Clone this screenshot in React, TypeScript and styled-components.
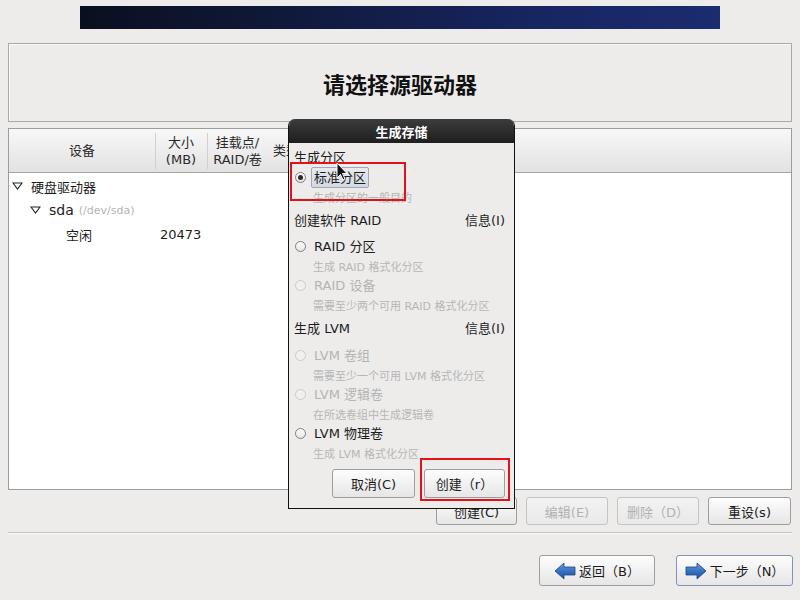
import React from "react";
import styled, { createGlobalStyle } from "styled-components";

const Global = createGlobalStyle`
  html, body { margin: 0; padding: 0; background: #edeceb; }
  body { font-family: "DejaVu Sans", "Noto Sans CJK SC", sans-serif; font-size: 13px; color: #1c1c1c; }
  #root { width: 800px; height: 600px; }
`;

const Page = styled.div`
  position: relative;
  width: 800px;
  height: 600px;
  box-sizing: border-box;
  padding: 6px 8px 0 8px;
  display: flex;
  flex-direction: column;
  overflow: hidden;
`;

const Banner = styled.div`
  height: 23px;
  margin: 0 72px;
  background: linear-gradient(90deg, #0a0f1f 0%, #111a3d 35%, #172560 70%, #1b2c6f 100%);
`;

const HeaderBox = styled.div`
  margin-top: 14px;
  height: 79px;
  box-sizing: border-box;
  border: 1px solid #a9a9a9;
  box-shadow: inset 1px 1px 0 #fafafa;
  display: flex;
  align-items: center;
  justify-content: center;
`;

const Title = styled.h1`
  margin: 0;
  font-family: "Noto Sans CJK SC", sans-serif;
  font-size: 22px;
  font-weight: 700;
  color: #111;
`;

const Table = styled.div`
  margin-top: 6px;
  height: 362px;
  box-sizing: border-box;
  border: 1px solid #9d9d9d;
  background: #fff;
  display: flex;
  flex-direction: column;
`;

const cols = "146px 52px 61px 1fr";

const HeadRow = styled.div`
  height: 43px;
  display: grid;
  grid-template-columns: ${cols};
  background: linear-gradient(#f8f8f8, #e2e2e2);
  border-bottom: 1px solid #a5a5a5;
`;

const HeadCell = styled.div<{ $left?: boolean }>`
  display: flex;
  align-items: center;
  justify-content: ${(p) => (p.$left ? "flex-start" : "center")};
  padding-left: ${(p) => (p.$left ? "5px" : "0")};
  text-align: center;
  line-height: 17px;
  color: #2a2a2a;
  position: relative;
  & + &::before {
    content: "";
    position: absolute;
    left: 0;
    top: 4px;
    bottom: 3px;
    width: 1px;
    background: #d0d0d0;
  }
`;

const Body = styled.div`
  padding-top: 1px;
  display: flex;
  flex-direction: column;
`;

const TreeRow = styled.div`
  height: 24px;
  display: grid;
  grid-template-columns: ${cols};
  align-items: center;
`;

const DeviceCell = styled.div<{ $indent: number }>`
  display: flex;
  align-items: center;
  padding-left: ${(p) => p.$indent}px;
  white-space: nowrap;
`;

const Expander = styled.svg`
  width: 11px;
  height: 8px;
  margin-right: 8px;
  flex: none;
`;

const DevName = styled.span<{ $big?: boolean }>`
  font-size: ${(p) => (p.$big ? "14px" : "13px")};
`;

const DevPath = styled.span`
  font-size: 11px;
  color: #b4b4b4;
  margin-left: 5px;
`;

const SizeCell = styled.div`
  padding-left: 5px;
`;

const ButtonRow = styled.div<{ $gap: number }>`
  display: flex;
  justify-content: flex-end;
  gap: ${(p) => p.$gap}px;
`;

const ActionRow = styled(ButtonRow)`
  margin-top: 7px;
  margin-right: 1px;
`;

const Button = styled.button<{ $w: number; $h?: number; $disabled?: boolean; $focus?: boolean }>`
  width: ${(p) => p.$w}px;
  height: ${(p) => p.$h ?? 28}px;
  box-sizing: border-box;
  border: 1px solid ${(p) => (p.$disabled ? "#c4c4c4" : p.$focus ? "#8193b6" : "#9e9e9e")};
  border-radius: 3px;
  background: ${(p) =>
    p.$disabled ? "linear-gradient(#f2f2f2, #e9e9e9)" : "linear-gradient(#fdfdfd, #e6e6e6)"};
  color: ${(p) => (p.$disabled ? "#b2b2b2" : "#1c1c1c")};
  font-family: "DejaVu Sans", "Noto Sans CJK SC", sans-serif;
  font-size: 13px;
  display: flex;
  align-items: center;
  justify-content: center;
  gap: 3px;
  padding: 0;
`;

const Separator = styled.div`
  margin-top: 7px;
  height: 1px;
  background: #c4c4c4;
  box-shadow: 0 1px 0 #f8f8f8;
`;

const NavRow = styled(ButtonRow)`
  margin-top: 22px;
  margin-right: -1px;
`;

/* Dialog */
const Dialog = styled.div`
  position: absolute;
  left: 288px;
  top: 119px;
  width: 227px;
  height: 390px;
  box-sizing: border-box;
  border: 1px solid #111;
  border-top: none;
  border-radius: 7px 7px 0 0;
  background: #edeceb;
  display: flex;
  flex-direction: column;
  overflow: hidden;
`;

const DialogTitle = styled.div`
  height: 24px;
  flex: none;
  background: linear-gradient(#3c3c3c, #1e1e1e);
  color: #fff;
  font-family: "Noto Sans CJK SC", sans-serif;
  font-weight: 700;
  font-size: 13px;
  display: flex;
  align-items: center;
  justify-content: center;
`;

const DialogBody = styled.div`
  padding: 2px 9px 10px 5px;
  display: flex;
  flex-direction: column;
`;

const Section = styled.div<{ $mt?: number }>`
  height: 22px;
  margin-top: ${(p) => p.$mt ?? 0}px;
  display: flex;
  align-items: center;
  justify-content: space-between;
`;

const Option = styled.div<{ $mt?: number }>`
  margin-top: ${(p) => p.$mt ?? 0}px;
  display: flex;
  flex-direction: column;
`;

const RadioLine = styled.div<{ $disabled?: boolean }>`
  height: 20px;
  display: flex;
  align-items: center;
  color: ${(p) => (p.$disabled ? "#b4b4b4" : "#1c1c1c")};
`;

const Radio = styled.span<{ $checked?: boolean; $disabled?: boolean }>`
  width: 11px;
  height: 11px;
  margin-left: 1px;
  margin-right: 8px;
  border-radius: 50%;
  box-sizing: border-box;
  border: 1px solid ${(p) => (p.$disabled ? "#cbcbcb" : "#7e7e7e")};
  background: ${(p) => (p.$disabled ? "#f0f0f0" : "linear-gradient(#ffffff, #e4e4e4)")};
  display: flex;
  align-items: center;
  justify-content: center;
  flex: none;
  &::after {
    content: "";
    display: ${(p) => (p.$checked ? "block" : "none")};
    width: 5px;
    height: 5px;
    border-radius: 50%;
    background: #2a2a2a;
  }
`;

const RadioLabel = styled.span<{ $hover?: boolean }>`
  padding: ${(p) => (p.$hover ? "1px 2px" : "0")};
  margin-left: ${(p) => (p.$hover ? "-3px" : "0")};
  border: ${(p) => (p.$hover ? "1px solid #9fa8b8" : "none")};
  border-radius: 2px;
  background: ${(p) => (p.$hover ? "linear-gradient(#e6e9ee, #d4d9e1)" : "transparent")};
  line-height: 17px;
`;

const SubText = styled.div`
  height: 19px;
  display: flex;
  align-items: center;
  padding-left: 19px;
  font-size: 11px;
  color: #b6b6b6;
`;

const DialogButtons = styled(ButtonRow)`
  margin-top: 7px;
`;

const Highlight = styled.div<{ $x: number; $y: number; $w: number; $h: number }>`
  position: absolute;
  left: ${(p) => p.$x}px;
  top: ${(p) => p.$y}px;
  width: ${(p) => p.$w}px;
  height: ${(p) => p.$h}px;
  box-sizing: border-box;
  border: 2px solid #e0121c;
  pointer-events: none;
`;

const Cursor = styled.svg`
  position: absolute;
  left: 336px;
  top: 162px;
  width: 12px;
  height: 19px;
`;

const ArrowIcon = ({ dir }: { dir: "left" | "right" }) => (
  <svg width="22" height="18" viewBox="0 0 22 18">
    <defs>
      <linearGradient id={`ag-${dir}`} x1="0" y1="0" x2="0" y2="1">
        <stop offset="0" stopColor="#6a9ce0" />
        <stop offset="0.5" stopColor="#3672c4" />
        <stop offset="1" stopColor="#1f4f98" />
      </linearGradient>
    </defs>
    {dir === "left" ? (
      <polygon points="1,9 10,1 10,5 21,5 21,13 10,13 10,17" fill={`url(#ag-${dir})`} stroke="#1d4585" strokeWidth="0.8" />
    ) : (
      <polygon points="21,9 12,1 12,5 1,5 1,13 12,13 12,17" fill={`url(#ag-${dir})`} stroke="#1d4585" strokeWidth="0.8" />
    )}
  </svg>
);

const Tri = () => (
  <Expander viewBox="0 0 11 8">
    <polygon points="1,1 10,1 5.5,7" fill="none" stroke="#222" strokeWidth="1.1" />
  </Expander>
);

export default function App() {
  return (
    <>
      <Global />
      <Page>
        <Banner />
        <HeaderBox>
          <Title>请选择源驱动器</Title>
        </HeaderBox>
        <Table>
          <HeadRow>
            <HeadCell>设备</HeadCell>
            <HeadCell>
              大小
              <br />
              (MB)
            </HeadCell>
            <HeadCell>
              挂载点/
              <br />
              RAID/卷
            </HeadCell>
            <HeadCell $left>类型</HeadCell>
          </HeadRow>
          <Body>
            <TreeRow>
              <DeviceCell $indent={3}>
                <Tri />
                <DevName>硬盘驱动器</DevName>
              </DeviceCell>
            </TreeRow>
            <TreeRow>
              <DeviceCell $indent={21}>
                <Tri />
                <DevName $big>sda</DevName>
                <DevPath>(/dev/sda)</DevPath>
              </DeviceCell>
            </TreeRow>
            <TreeRow>
              <DeviceCell $indent={57}>
                <DevName>空闲</DevName>
              </DeviceCell>
              <SizeCell>20473</SizeCell>
            </TreeRow>
          </Body>
        </Table>
        <ActionRow $gap={9}>
          <Button $w={81}>创建(C)</Button>
          <Button $w={82} $disabled>编辑(E)</Button>
          <Button $w={82} $disabled>删除（D）</Button>
          <Button $w={83}>重设(s)</Button>
        </ActionRow>
        <Separator />
        <NavRow $gap={21}>
          <Button $w={116} $h={31}>
            <ArrowIcon dir="left" />
            返回（B）
          </Button>
          <Button $w={117} $h={31} $focus>
            <ArrowIcon dir="right" />
            下一步（N）
          </Button>
        </NavRow>

        <Dialog>
          <DialogTitle>生成存储</DialogTitle>
          <DialogBody>
            <Section>生成分区</Section>
            <Option>
              <RadioLine>
                <Radio $checked />
                <RadioLabel $hover>标准分区</RadioLabel>
              </RadioLine>
              <SubText>生成分区的一般目的</SubText>
            </Option>
            <Section $mt={2}>
              <span>创建软件 RAID</span>
              <span>信息(I)</span>
            </Section>
            <Option $mt={6}>
              <RadioLine>
                <Radio />
                <RadioLabel>RAID 分区</RadioLabel>
              </RadioLine>
              <SubText>生成 RAID 格式化分区</SubText>
            </Option>
            <Option>
              <RadioLine $disabled>
                <Radio $disabled />
                <RadioLabel>RAID 设备</RadioLabel>
              </RadioLine>
              <SubText>需要至少两个可用 RAID 格式化分区</SubText>
            </Option>
            <Section $mt={2}>
              <span>生成 LVM</span>
              <span>信息(I)</span>
            </Section>
            <Option $mt={7}>
              <RadioLine $disabled>
                <Radio $disabled />
                <RadioLabel>LVM 卷组</RadioLabel>
              </RadioLine>
              <SubText>需要至少一个可用 LVM 格式化分区</SubText>
            </Option>
            <Option>
              <RadioLine $disabled>
                <Radio $disabled />
                <RadioLabel>LVM 逻辑卷</RadioLabel>
              </RadioLine>
              <SubText>在所选卷组中生成逻辑卷</SubText>
            </Option>
            <Option>
              <RadioLine>
                <Radio />
                <RadioLabel>LVM 物理卷</RadioLabel>
              </RadioLine>
              <SubText>生成 LVM 格式化分区</SubText>
            </Option>
            <DialogButtons $gap={9}>
              <Button $w={83} $h={29}>取消(C)</Button>
              <Button $w={81} $h={29}>创建（r）</Button>
            </DialogButtons>
          </DialogBody>
        </Dialog>

        <Highlight $x={290} $y={162} $w={116} $h={39} />
        <Highlight $x={420} $y={458} $w={90} $h={43} />
        <Cursor viewBox="0 0 12 19">
          <polygon points="1,1 1,16 4.5,12.5 7,18 9,17 6.5,11.5 11,11.5" fill="#111" stroke="#fff" strokeWidth="1" />
        </Cursor>
      </Page>
    </>
  );
}
